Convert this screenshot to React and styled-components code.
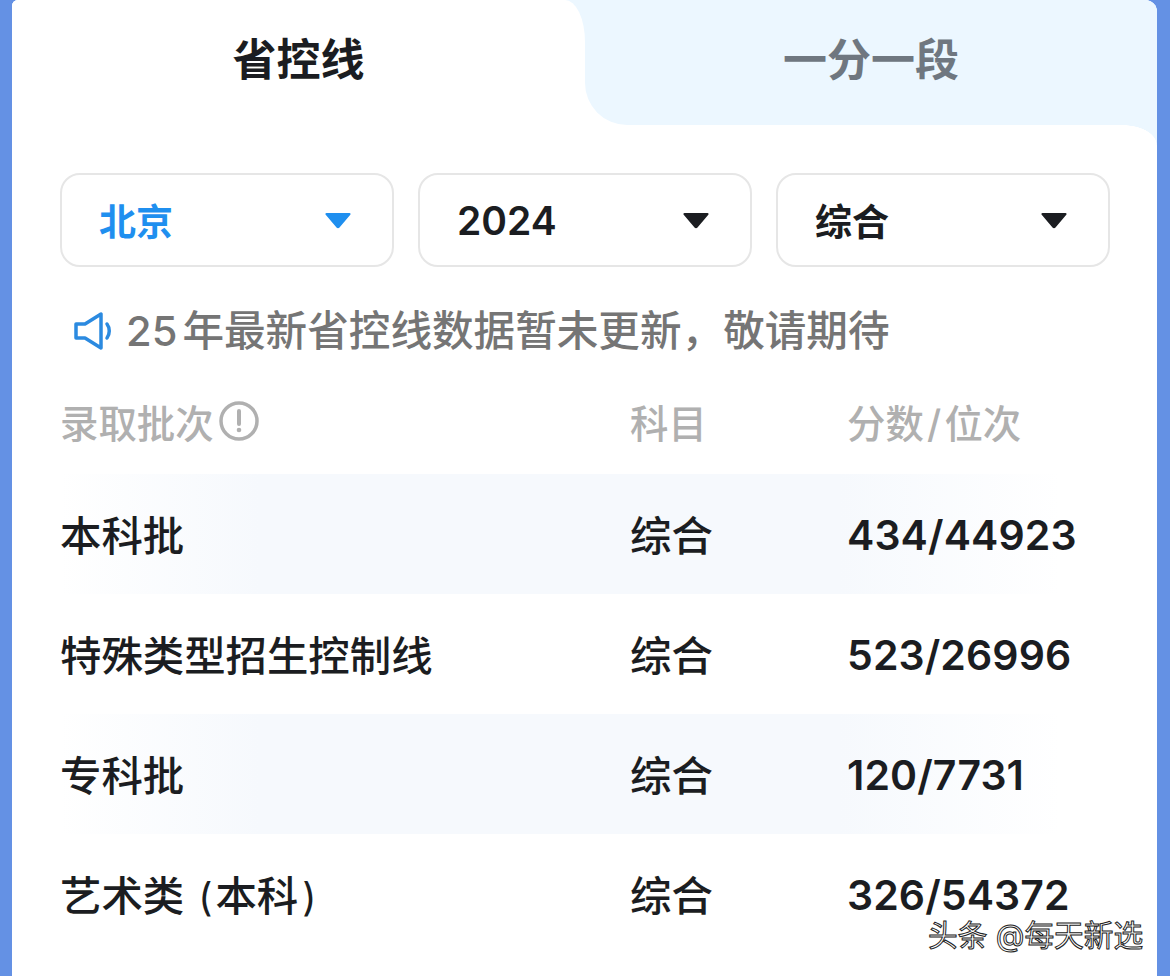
import styled, { createGlobalStyle } from 'styled-components'

const GlobalStyle = createGlobalStyle`
  html, body {
    margin: 0;
    padding: 0;
    background: #6491e4;
  }
  body {
    font-family: Inter, "Noto Sans CJK SC", sans-serif;
  }
`

const Page = styled.div`
  position: relative;
  width: 1170px;
  height: 976px;
  overflow: hidden;
  background: #6491e4;
`

const Card = styled.div`
  width: 1145px;
  height: 976px;
  margin-left: 12px;
  background: #fff;
  border-radius: 6px 12px 0 0;
  overflow: hidden;
`

const TabBar = styled.div`
  position: relative;
  display: flex;
  height: 125px;
  background: linear-gradient(#ecf7ff 50%, #fff 50%);

  &::after {
    content: '';
    position: absolute;
    right: 0;
    top: 125px;
    width: 34px;
    height: 20px;
    background: radial-gradient(ellipse 34px 20px at 0 100%, #fff 98%, #ecf7ff 100%);
  }
`

const Tab = styled.div`
  display: flex;
  align-items: center;
  justify-content: center;
  width: ${(p) => (p.$active ? '573px' : '572px')};
  padding-bottom: 12px;
  box-sizing: border-box;
  font-size: 44px;
  font-weight: ${(p) => (p.$active ? 700 : 600)};
  color: ${(p) => (p.$active ? '#1b1d21' : '#6f7780')};
  background: ${(p) => (p.$active ? '#fff' : '#ecf7ff')};
  border-radius: ${(p) => (p.$active ? '0 20px 0 0 / 0 42px 0 0' : '0 0 0 42px')};
`

const Filters = styled.div`
  display: flex;
  gap: 24px;
  margin: 48px 47px 0 48px;
`

const Select = styled.div`
  display: flex;
  align-items: center;
  justify-content: space-between;
  flex: 1;
  height: 94px;
  box-sizing: border-box;
  padding: 0 41px 0 37px;
  border: 2px solid #e6e6e6;
  border-radius: 20px;
  font-size: ${(p) => (p.$number ? '39px' : '37px')};
  font-weight: ${(p) => (p.$number ? 600 : 700)};
  color: ${(p) => p.$color || '#1b1d21'};
`

const Caret = styled.svg`
  width: 26px;
  height: 17px;
  fill: currentColor;
`

const Notice = styled.div`
  display: flex;
  align-items: center;
  gap: 14px;
  height: 42px;
  margin: 43px 0 0 62px;
  font-size: 41.6px;
  line-height: 42px;
  font-weight: 500;
  word-spacing: -6px;
  color: #757575;
  white-space: nowrap;
`

const Table = styled.div`
  margin: 0 48px;
  width: 1000px;
`

const TableHead = styled.div`
  display: grid;
  grid-template-columns: 570px 217px 1fr;
  align-items: center;
  height: 91px;
  margin-top: 31px;
  padding-bottom: 16px;
  box-sizing: border-box;
  font-size: 38.4px;
  font-weight: 500;
  word-spacing: -7px;
  color: #b0b0b0;
`

const HeadCell = styled.div`
  display: flex;
  align-items: center;
  gap: 5px;
  height: 52px;
`

const Row = styled.div`
  display: grid;
  grid-template-columns: 570px 217px 1fr;
  align-items: center;
  height: 120px;
  color: #1b1d21;
  background: ${(p) => (p.$tinted ? 'linear-gradient(90deg, #fff 0%, #f6f9fd 20%, #f6f9fd 78%, #fff 100%)' : '#fff')};
`

const Cell = styled.div`
  font-size: 41.4px;
  font-weight: 500;
  white-space: nowrap;
  padding-bottom: 2px;
`

const Score = styled.div`
  font-size: 41px;
  line-height: 42px;
  font-weight: 600;
  letter-spacing: 0.1px;
  white-space: nowrap;
  padding-top: 2px;
`

const Paren = styled.span`
  font-size: 39px;
  font-weight: 400;
  margin: ${(p) => (p.$open ? '0 3px 0 14px' : '0 0 0 4px')};
`

const Watermark = styled.div`
  position: absolute;
  left: 928px;
  top: 916px;
  font-size: 29.700px;
  line-height: 38px;
  color: #fff;
  -webkit-text-stroke: 1px #222;
  white-space: nowrap;
`

const rows = [
  ['本科批', '综合', '434/44923'],
  ['特殊类型招生控制线', '综合', '523/26996'],
  ['专科批', '综合', '120/7731'],
  [<>艺术类<Paren $open>(</Paren>本科<Paren>)</Paren></>, '综合', '326/54372'],
]

const CaretIcon = () => (
  <Caret viewBox="0 0 26 17">
    <path d="M1.500 1h23c1 0 1.400 1 .8 1.700L14.500 15.500c-.8.9-2.200.9-3 0L.7 2.700C.1 2 .5 1 1.500 1z" />
  </Caret>
)

const SpeakerIcon = () => (
  <svg width="38" height="38" viewBox="0 0 38 38" fill="none" stroke="#2b8ae0" strokeWidth="3.5" strokeLinejoin="round" strokeLinecap="round">
    <path d="M2 12h9L27 2v34L11 26H2z" />
    <path d="M33 12c3 4 3 10 0 14" />
  </svg>
)

const InfoIcon = () => (
  <svg width="40" height="40" viewBox="0 0 40 40" fill="none" stroke="#b0b0b0">
    <circle cx="20" cy="20" r="18" strokeWidth="3.500" />
    <path d="M20 10v13" strokeWidth="4" strokeLinecap="round" />
    <circle cx="20" cy="29" r="2.300" fill="#b0b0b0" stroke="none" />
  </svg>
)

const App = () => {
  return (
    <Page>
      <GlobalStyle />
      <Card>
        <TabBar>
          <Tab $active>省控线</Tab>
          <Tab>一分一段</Tab>
        </TabBar>
        <Filters>
          <Select $color="#1f8fef">北京<CaretIcon /></Select>
          <Select $number>2024<CaretIcon /></Select>
          <Select>综合<CaretIcon /></Select>
        </Filters>
        <Notice>
          <SpeakerIcon />
          <span>25 年最新省控线数据暂未更新，敬请期待</span>
        </Notice>
        <Table>
          <TableHead>
            <HeadCell>录取批次<InfoIcon /></HeadCell>
            <HeadCell>科目</HeadCell>
            <HeadCell>分数 / 位次</HeadCell>
          </TableHead>
          {rows.map((row, i) => (
            <Row key={i} $tinted={i % 2 === 0}>
              <Cell>{row[0]}</Cell>
              <Cell>{row[1]}</Cell>
              <Score>{row[2]}</Score>
            </Row>
          ))}
        </Table>
      </Card>
      <Watermark>头条 @每天新选</Watermark>
    </Page>
  )
}

export default App
